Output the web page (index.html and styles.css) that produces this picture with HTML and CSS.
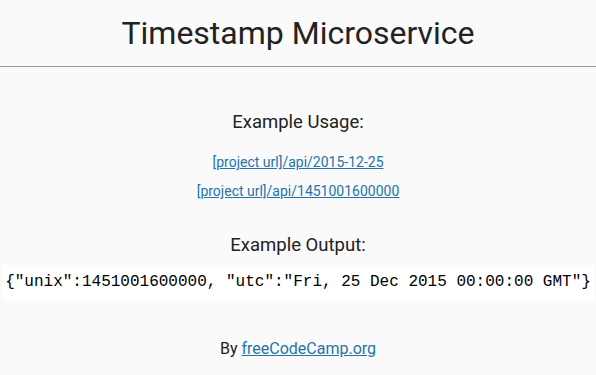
FILE: index.html
```html
<!DOCTYPE html>
<html>
<head>
<meta charset="utf-8">
<title>Timestamp Microservice</title>
<link rel="stylesheet" href="styles.css">
</head>
<body>
<h1 class="title">Timestamp Microservice</h1>
<hr class="rule">
<div class="container">
  <h3 class="heading">Example Usage:</h3>
  <ul class="links">
    <li><a href="#">[project url]/api/2015-12-25</a></li>
    <li><a href="#">[project url]/api/1451001600000</a></li>
  </ul>
  <h3 class="heading heading-output">Example Output:</h3>
  <p class="output"><code class="code">{"unix":1451001600000, "utc":"Fri, 25 Dec 2015 00:00:00 GMT"}</code></p>
</div>
<div class="footer"><p>By <a href="#">freeCodeCamp.org</a></p></div>
</body>
</html>
```
FILE: styles.css
```css
html, body { margin: 0; padding: 0; }
body {
  font-family: Roboto, "Liberation Sans", sans-serif;
  font-size: 14px;
  color: #222;
  background: #fafafa;
  text-align: center;
  line-height: 20px;
  height: 375px;
  overflow: hidden;
}
.title {
  font-weight: 400;
  font-size: 32px;
  margin: 0;
  padding-top: 14px;
  line-height: 38px;
}
.rule {
  margin: 14px 0 0;
  border: 0;
  border-top: 1px solid #999;
}
.container { padding-top: 43px; }
.heading {
  font-weight: 400;
  font-size: 18.5px;
  line-height: 24px;
  margin: 0;
}
.links {
  list-style: none;
  margin: 18px 0 0;
  padding: 0;
}
.links li { margin-bottom: 9px; }
a { color: #2574a9; }
.heading-output { margin-top: 32px; }
.output { margin: 8px 0 0; }
.code {
  display: inline-block;
  white-space: nowrap;
  font-family: "Liberation Mono", "Courier New", monospace;
  font-size: 16px;
  line-height: 19px;
  background: #fff;
  color: #000;
  padding: 8px 3px;
}
.footer { margin-top: 39px; font-size: 16px; }
.footer p { margin: 0; }
```
